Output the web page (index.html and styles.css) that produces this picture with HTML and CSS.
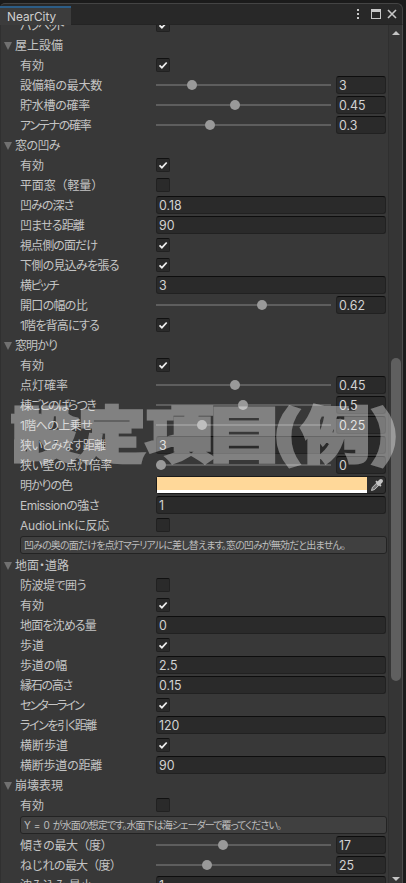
FILE: index.html
```
<!DOCTYPE html>
<html lang="ja">
<head>
<meta charset="utf-8">
<title>NearCity</title>
<link rel="stylesheet" href="styles.css">
</head>
<body>
<div class="window">
  <header class="titlebar">
    <div class="tab">NearCity</div>
    <svg class="controls" width="44" height="14" viewBox="0 0 44 14">
      <g fill="#c8c8c8"><rect x="4" y="2" width="2" height="2"/><rect x="4" y="6" width="2" height="2"/><rect x="4" y="10" width="2" height="2"/>
      <path fill-rule="evenodd" d="M18 2h10v10H18zM19 5v6h8V5z"/></g>
      <path d="M35 3l8 8M43 3l-8 8" stroke="#c8c8c8" stroke-width="1.6"/>
    </svg>
  </header>
  <div class="body">
    <main class="rows" id="rows"></main>
    <aside class="scrollbar"><i class="up"></i><i class="thumb"></i><i class="down"></i></aside>
  </div>
  <svg class="caption" width="406" height="90" viewBox="0 0 406 90">
    <text x="11" y="61" textLength="202" lengthAdjust="spacingAndGlyphs">設定項</text>
    <text x="205" y="61" textLength="79" lengthAdjust="spacingAndGlyphs">目</text>
    <text class="paren" x="272" y="59" textLength="31" lengthAdjust="spacingAndGlyphs">(</text>
    <text x="301" y="61" textLength="69" lengthAdjust="spacingAndGlyphs">例</text>
    <text class="paren" x="369" y="59" textLength="31" lengthAdjust="spacingAndGlyphs">)</text>
  </svg>
</div>
<script src="app.js"></script>
</body>
</html>
```

FILE: styles.css
```
* { box-sizing: border-box; }
body { margin: 0; background: #1b1b1b; font-family: Inter, "Noto Sans CJK JP", sans-serif; font-size: 12px; color: #c4c4c4; }
.window { position: relative; width: 406px; height: 883px; overflow: hidden; padding-top: 3px; display: flex; flex-direction: column; }
.titlebar { width: 403px; height: 22px; flex: none; background: #282828; border: 1px solid #444; border-bottom-color: #242424; border-width: 1px 1px 1px 0; border-radius: 5px 6px 0 0; display: flex; justify-content: space-between; align-items: flex-start; }
.tab { margin-top: 2px; width: 71px; height: 19px; border-top: 2px solid #2c5d87; background: #3c3c3c; padding-left: 7px; line-height: 19px; font-size: 11.8px; color: #d0d0d0; }
.controls { margin: 3px 5px 0 0; }
.body { flex: 1; width: 403px; min-height: 0; display: flex; background: #383838; border-left: 1px solid #303030; border-right: 1px solid #4c4c4c; }
.rows { flex: 1; margin-top: -10px; clip-path: inset(10px 0 0 0); height: 868px; overflow: hidden; }
.row { height: 20px; display: flex; align-items: center; padding-left: 19px; }
.row.head { padding-left: 3px; }
.tri { width: 0; height: 0; border: 4.5px solid transparent; border-top: 8px solid #707070; border-bottom: 0; margin: 1px 3px 0 0; }
.label { width: 136px; flex: none; white-space: nowrap; line-height: 20px; padding-top: 1px; font-feature-settings: "palt"; }
.head .label { padding-top: 2px; }
.full { font-feature-settings: normal; }
.check { width: 14px; height: 14px; background: #2a2a2a; border: 1px solid #212121; border-top-color: #111; border-radius: 2px; }
.check svg { display: block; }
.field { width: 230px; height: 18px; background: #2a2a2a; border: 1px solid #212121; border-top-color: #0d0d0d; border-radius: 3px; padding-left: 2px; line-height: 18px; font-size: 12.4px; color: #d2d2d2; }
.slider { width: 175px; height: 2px; background: #5e5e5e; position: relative; margin-right: 5px; flex: none; }
.knob { position: absolute; top: -4px; width: 10px; height: 10px; margin-left: -5px; border-radius: 50%; background: #999; }
.slider + .field { width: 50px; }
.color { width: 230px; height: 18px; border: 1px solid #1a1a1a; border-radius: 3px; background: #2e2e2e; display: flex; }
.swatch { width: 211px; height: 16px; background: #ffd899; border-bottom: 3px solid #fff; }
.picker { margin-left: 2px; }
.help { width: 367px; height: 18px; border: 1px solid #232323; border-radius: 3px; background: #404040; padding-left: 3px; font-size: 10px; line-height: 17px; white-space: nowrap; color: #bdbdbd; font-feature-settings: "palt"; word-spacing: 2px; }
.scrollbar { width: 14px; border-left: 1px solid #2f2f2f; background: #353535; display: flex; flex-direction: column; align-items: center; }
.up, .down { border: 4px solid transparent; width: 0; height: 0; flex: none; }
.up { border-top: 0; border-bottom: 4px solid #c4c4c4; margin-top: 6px; }
.down { border-bottom: 0; border-top: 4px solid #c4c4c4; margin-top: auto; margin-bottom: 2px; }
.thumb { width: 10px; height: 323px; flex: none; margin-top: 323px; border-radius: 5px; background: #5f5f5f; }
.caption { position: absolute; left: 0; top: 396px; opacity: .37; }
.caption text { font: 900 60px "Noto Sans CJK JP", sans-serif; fill: #fff; stroke: #fff; stroke-width: 3px; }
.caption .paren { font-size: 57px; stroke-width: 3px; }
```

FILE: app.js
```
// [kind, label, label width, value, knob position]
const data = [
  ['check', 'パラペット', 43, 1],
  ['head', '屋上設備', 48],
  ['check', '有効', 24, 1],
  ['slider', '設備箱の最大数', 82, '3', 36],
  ['slider', '貯水槽の確率', 70, '0.45', 79],
  ['slider', 'アンテナの確率', 70.5, '0.3', 54],
  ['head', '窓の凹み', 45],
  ['check', '有効', 24, 1],
  ['check', '平面窓（軽量）', 83, 0],
  ['field', '凹みの深さ', 53.5, '0.18'],
  ['field', '凹ませる距離', 64, '90'],
  ['check', '視点側の面だけ', 77, 1],
  ['check', '下側の見込みを張る', 99, 1],
  ['field', '横ピッチ', 38, '3'],
  ['slider', '開口の幅の比', 67, '0.62', 106],
  ['check', '1階を背高にする', 79, 1],
  ['head', '窓明かり', 42],
  ['check', '有効', 24, 1],
  ['slider', '点灯確率', 48, '0.45', 79],
  ['slider', '棟ごとのばらつき', 75, '0.5', 87],
  ['slider', '1階への上乗せ', 72, '0.25', 46],
  ['field', '狭いとみなす距離', 85, '3'],
  ['slider', '狭い壁の点灯倍率', 92, '0', 5],
  ['color', '明かりの色', 52],
  ['field', 'Emissionの強さ', 79, '1'],
  ['check', 'AudioLinkに反応', 89, 0],
  ['help', '凹みの奥の面だけを点灯マテリアルに差し替えます。窓の凹みが無効だと出ません。', 321],
  ['head', '地面・道路', 54],
  ['check', '防波堤で囲う', 66, 0],
  ['check', '有効', 24, 1],
  ['field', '地面を沈める量', 76, '0'],
  ['check', '歩道', 24, 1],
  ['field', '歩道の幅', 47, '2.5'],
  ['field', '縁石の高さ', 52, '0.15'],
  ['check', 'センターライン', 63, 1],
  ['field', 'ラインを引く距離', 76, '120'],
  ['check', '横断歩道', 48, 1],
  ['field', '横断歩道の距離', 82, '90'],
  ['head', '崩壊表現', 48],
  ['check', '有効', 24, 0],
  ['help', 'Y = 0 が水面の想定です。水面下は海シェーダーで覆ってください。', 257],
  ['slider', '傾きの最大（度）', 92, '17', 67],
  ['slider', 'ねじれの最大（度）', 101, '25', 51],
  ['field', '沈み込み 最小', 72, '1']
];
const tick = '<svg width="12" height="12" viewBox="0 0 12 12"><path d="M2.5 6.3l2.4 2.4 4.8-5.2" fill="none" stroke="#eee" stroke-width="1.7"/></svg>';
const dropper = '<svg class="picker" width="16" height="16" viewBox="0 0 16 16"><path d="M2.5 13.5l1-3.2L8.300 5.500l2.200 2.200-4.800 4.800z" fill="#777" stroke="#c4c4c4"/><path d="M7 4l5 5" stroke="#c4c4c4" stroke-width="1.8"/><path d="M9.500 6.500l2.500-2.500" stroke="#c4c4c4" stroke-width="4" stroke-linecap="round"/></svg>';
const field = v => `<div class="field">${v}</div>`;
const parts = {
  head: () => '',
  help: () => '',
  check: v => `<div class="check">${v ? tick : ''}</div>`,
  field,
  slider: (v, k) => `<div class="slider"><div class="knob" style="left:${k}px"></div></div>${field(v)}`,
  color: () => `<div class="color"><div class="swatch"></div>${dropper}</div>`
};
document.getElementById('rows').innerHTML = data.map(([kind, text, w, v, k]) => {
  const label = `<span class="fit ${text.includes('（') ? 'full' : ''}" data-width="${w}">${text}</span>`;
  return `<div class="row ${kind === 'head' ? 'head' : ''}">${kind === 'head' ? '<i class="tri"></i>' : ''}<div class="${kind === 'help' ? 'help' : 'label'}">${label}</div>${parts[kind](v, k)}</div>`;
}).join('');
document.querySelectorAll('.fit').forEach(el => {
  const spare = el.dataset.width - el.getBoundingClientRect().width;
  el.style.letterSpacing = spare / el.textContent.length + 'px';
});
```
